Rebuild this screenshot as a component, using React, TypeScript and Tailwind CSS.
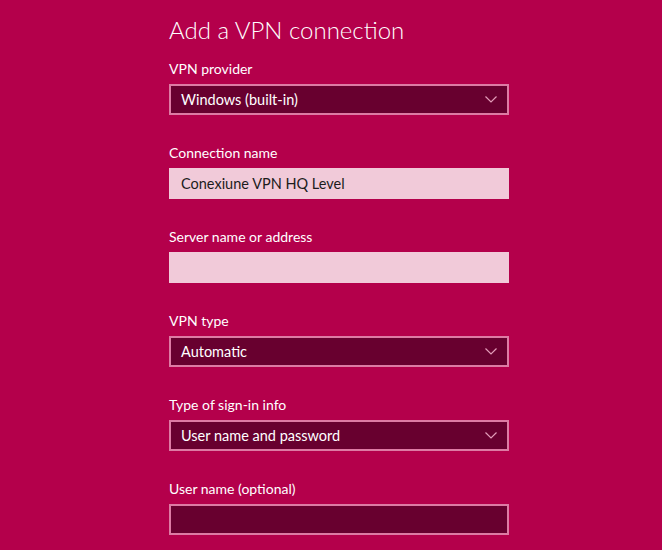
import React from "react";

type Field = {
  label: string;
  kind: "select" | "input" | "darkInput";
  value?: string;
};

const fields: Field[] = [
  { label: "VPN provider", kind: "select", value: "Windows (built-in)" },
  { label: "Connection name", kind: "input", value: "Conexiune VPN HQ Level" },
  { label: "Server name or address", kind: "input", value: "" },
  { label: "VPN type", kind: "select", value: "Automatic" },
  { label: "Type of sign-in info", kind: "select", value: "User name and password" },
  { label: "User name (optional)", kind: "darkInput", value: "" },
];

const Chevron: React.FC = () => (
  <svg width="12" height="7" viewBox="0 0 12 7" fill="none" className="text-[#e39cb9]">
    <path d="M0.5 0.5 L6 6 L11.5 0.5" stroke="currentColor" strokeWidth="1.2" />
  </svg>
);

const FieldRow: React.FC<{ field: Field }> = ({ field }) => {
  let box: React.ReactNode;
  if (field.kind === "select") {
    box = (
      <div className="h-[31px] w-[340px] border-2 border-[#dd7ba4] bg-[#68002f] flex items-center justify-between pl-[10px] pr-[10px] text-white text-[14.5px]">
        <span>{field.value}</span>
        <Chevron />
      </div>
    );
  } else if (field.kind === "input") {
    box = (
      <div className="h-[31px] w-[340px] bg-[#f1cad9] flex items-center pl-[12px] text-[#1c1c1c] text-[14.5px]">
        {field.value}
      </div>
    );
  } else {
    box = <div className="h-[31px] w-[340px] border-2 border-[#dd7ba4] bg-[#68002f]" />;
  }

  return (
    <div className="flex flex-col">
      <div className="h-[20px] pt-[1px] leading-[20px] text-[14px] text-white">{field.label}</div>
      <div className="mt-[6px]">{box}</div>
    </div>
  );
};

export default function App() {
  return (
    <div
      className="w-[662px] h-[550px] overflow-hidden bg-[#b4004b] pl-[169px]"
      style={{ fontFamily: "Lato, 'Noto Sans', sans-serif" }}
    >
      <h1 className="pt-[14px] h-[58px] text-[24px] leading-[32px] font-light text-white">
        Add a VPN connection
      </h1>
      <div className="flex flex-col gap-[27px]">
        {fields.map((f) => (
          <FieldRow key={f.label} field={f} />
        ))}
      </div>
    </div>
  );
}
